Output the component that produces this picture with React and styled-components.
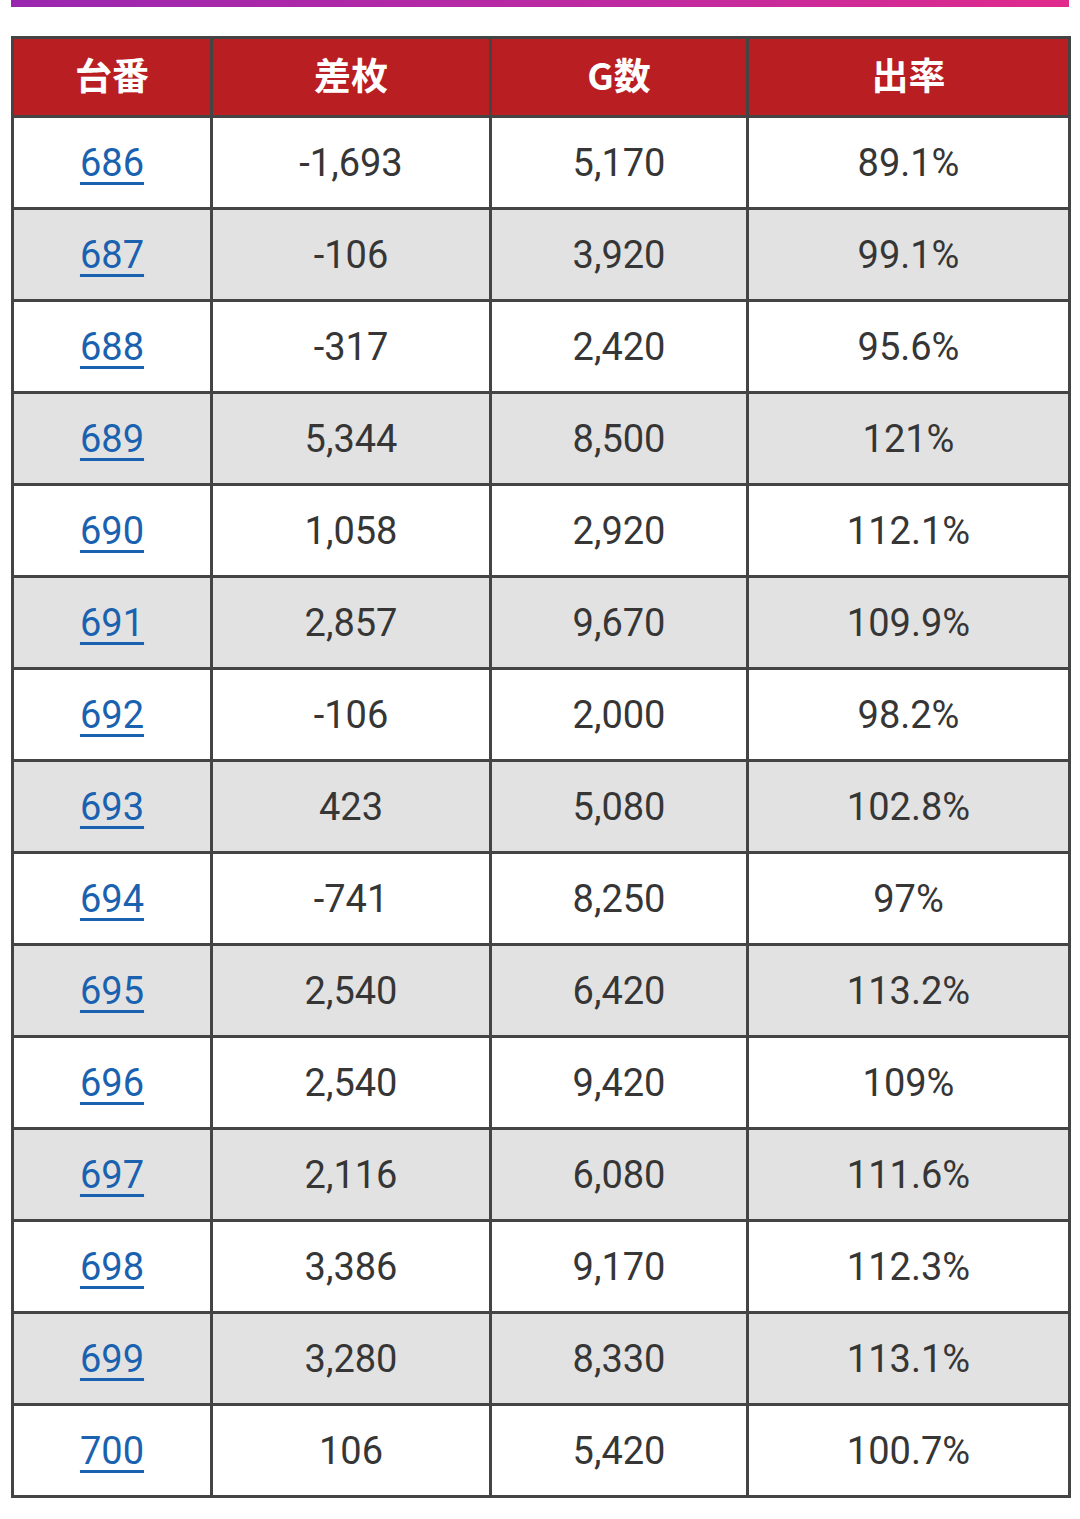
import React from "react"
import styled, { createGlobalStyle } from "styled-components"

const GlobalStyle = createGlobalStyle`
  html, body {
    margin: 0;
    padding: 0;
    background: #fff;
  }
  body {
    font-family: Roboto, "Noto Sans CJK JP", sans-serif;
  }
`

const rows = [
  ["686", "-1,693", "5,170", "89.1%"],
  ["687", "-106", "3,920", "99.1%"],
  ["688", "-317", "2,420", "95.6%"],
  ["689", "5,344", "8,500", "121%"],
  ["690", "1,058", "2,920", "112.1%"],
  ["691", "2,857", "9,670", "109.9%"],
  ["692", "-106", "2,000", "98.2%"],
  ["693", "423", "5,080", "102.8%"],
  ["694", "-741", "8,250", "97%"],
  ["695", "2,540", "6,420", "113.2%"],
  ["696", "2,540", "9,420", "109%"],
  ["697", "2,116", "6,080", "111.6%"],
  ["698", "3,386", "9,170", "112.3%"],
  ["699", "3,280", "8,330", "113.1%"],
  ["700", "106", "5,420", "100.7%"],
]

const App = () => {
  return (
    <Page>
      <GlobalStyle />
      <TopBar />
      <DataTable>
        <colgroup>
          <col style={{ width: 199 }} />
          <col style={{ width: 279 }} />
          <col style={{ width: 257 }} />
          <col style={{ width: 322 }} />
        </colgroup>
        <thead>
          <tr>
            <Head>台番</Head>
            <Head>差枚</Head>
            <Head>G数</Head>
            <Head>出率</Head>
          </tr>
        </thead>
        <tbody>
          {rows.map((r, i) => (
            <Row key={r[0]} $even={i % 2 === 1}>
              <Cell>
                <MachineLink href="#">{r[0]}</MachineLink>
              </Cell>
              <Cell>{r[1]}</Cell>
              <Cell>{r[2]}</Cell>
              <Cell>{r[3]}</Cell>
            </Row>
          ))}
        </tbody>
      </DataTable>
    </Page>
  )
}

export default App

const Page = styled.div`
  padding: 0 11px 20px;
`

const TopBar = styled.div`
  height: 7px;
  background: linear-gradient(90deg, #9a27b0 0%, #c02aa0 60%, #e02a8c 100%);
  margin-bottom: 29px;
`

const DataTable = styled.table`
  width: 1058px;
  border-collapse: collapse;
  table-layout: fixed;
  border: 3px solid #444;
`

const Head = styled.th`
  background: #b91e22;
  color: #fff;
  font-family: "Noto Sans CJK JP", sans-serif;
  font-weight: 700;
  font-size: 37px;
  height: 70px;
  padding: 0 0 6px;
  border: 3px solid #444;
  text-align: center;
  vertical-align: middle;
  line-height: 1;
`

const Row = styled.tr`
  background: ${(p) => (p.$even ? "#e2e2e2" : "#fff")};
`

const Cell = styled.td`
  height: 89px;
  padding: 0;
  border: 3px solid #444;
  text-align: center;
  vertical-align: middle;
  font-family: Roboto, sans-serif;
  font-size: 38px;
  color: #363636;
  line-height: 1;
`

const MachineLink = styled.a`
  color: #1a62b0;
  text-decoration: underline;
  text-decoration-thickness: 3px;
  text-underline-offset: 6px;
`
